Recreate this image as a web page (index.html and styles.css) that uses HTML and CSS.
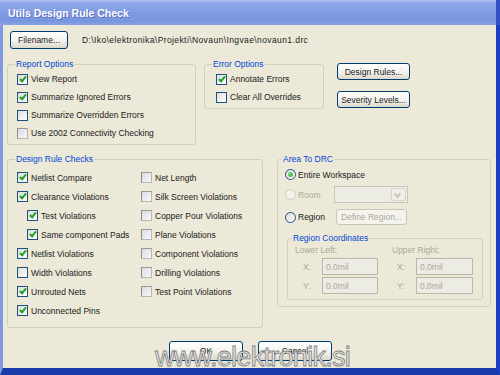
FILE: index.html
```html
<!DOCTYPE html>
<html lang="en">
<head>
  <meta charset="UTF-8" />
  <title>Utils Design Rule Check</title>
  <link rel="stylesheet" href="styles.css">
</head>
<body>
  <div class="window">
    <div class="titlebar">Utils Design Rule Check</div>
    <div class="client">
      <div class="file-row">
        <button class="btn btn-file">Filename...</button>
        <span class="path">D:\Iko\elektronika\Projekti\Novaun\Ingvae\novaun1.drc</span>
      </div>

      <div class="top-row">
        <fieldset class="group group-report">
          <legend>Report Options</legend>
          <label class="check"><span class="box on"></span>View Report</label>
          <label class="check"><span class="box on"></span>Summarize Ignored Errors</label>
          <label class="check"><span class="box"></span>Summarize Overridden Errors</label>
          <label class="check"><span class="box dim"></span>Use 2002 Connectivity Checking</label>
        </fieldset>

        <fieldset class="group group-error">
          <legend>Error Options</legend>
          <label class="check"><span class="box on"></span>Annotate Errors</label>
          <label class="check"><span class="box"></span>Clear All Overrides</label>
        </fieldset>

        <div class="side-buttons">
          <button class="btn">Design Rules...</button>
          <button class="btn">Severity Levels...</button>
        </div>
      </div>

      <div class="mid-row">
        <fieldset class="group group-drc">
          <legend>Design Rule Checks</legend>
          <div class="drc-cols">
            <div class="drc-col first">
              <label class="check"><span class="box on"></span>Netlist Compare</label>
              <label class="check"><span class="box on"></span>Clearance Violations</label>
              <label class="check sub"><span class="box on"></span>Test Violations</label>
              <label class="check sub"><span class="box on"></span>Same component Pads</label>
              <label class="check"><span class="box on"></span>Netlist Violations</label>
              <label class="check"><span class="box"></span>Width Violations</label>
              <label class="check"><span class="box on"></span>Unrouted Nets</label>
              <label class="check"><span class="box on"></span>Unconnected Pins</label>
            </div>
            <div class="drc-col">
              <label class="check"><span class="box dim"></span>Net Length</label>
              <label class="check"><span class="box dim"></span>Silk Screen Violations</label>
              <label class="check"><span class="box dim"></span>Copper Pour Violations</label>
              <label class="check"><span class="box dim"></span>Plane Violations</label>
              <label class="check"><span class="box dim"></span>Component Violations</label>
              <label class="check"><span class="box dim"></span>Drilling Violations</label>
              <label class="check"><span class="box dim"></span>Test Point Violations</label>
            </div>
          </div>
        </fieldset>

        <fieldset class="group group-area">
          <legend>Area To DRC</legend>
          <div class="area-row row-entire">
            <span class="radio on"></span><span class="area-label">Entire Workspace</span>
          </div>
          <div class="area-row row-room">
            <span class="radio off"></span><span class="area-label disabled">Room</span>
            <div class="combo"><span class="combo-arrow"></span></div>
          </div>
          <div class="area-row row-region">
            <span class="radio"></span><span class="area-label">Region</span>
            <button class="btn btn-define" disabled>Define Region...</button>
          </div>

          <fieldset class="group group-coords">
            <legend>Region Coordinates</legend>
            <div class="coords">
              <span class="coord-head">Lower Left:</span>
              <span class="coord-head right">Upper Right:</span>
              <span class="coord-label">X:</span>
              <input class="coord-input" value="0.0mil" disabled>
              <span class="coord-label right">X:</span>
              <input class="coord-input" value="0.0mil" disabled>
              <span class="coord-label">Y:</span>
              <input class="coord-input" value="0.0mil" disabled>
              <span class="coord-label right">Y:</span>
              <input class="coord-input" value="0.0mil" disabled>
            </div>
          </fieldset>
        </fieldset>
      </div>

      <div class="bottom-row">
        <button class="btn btn-main">OK</button>
        <button class="btn btn-main">Cancel</button>
      </div>
    </div>
    <div class="watermark">www.elektronik.si</div>
  </div>
</body>
</html>
```

FILE: styles.css
```css
body {
  margin: 0;
  padding: 0;
  background: #ECE9D8;
  font-family: 'Liberation Sans', Arial, sans-serif;
  font-size: 8.5px;
  color: #1a1a1a;
}

.window {
  width: 500px;
  height: 375px;
  display: flex;
  flex-direction: column;
  position: relative;
  overflow: hidden;
}

.titlebar {
  height: 25px;
  flex-shrink: 0;
  display: flex;
  align-items: center;
  padding-left: 8px;
  color: #fff;
  font-weight: bold;
  font-size: 10.5px;
  background: linear-gradient(#b3c4f1 0, #90a8e9 3px, #809be3 50%, #7a95e0 85%, #8aa2e5 100%);
  border-right: 4px solid #3451c9;
  text-shadow: 1px 1px 0 #5a70c0;
}

.client {
  flex: 1;
  background: #ECE9D8;
  border-left: 3px solid #7f98e2;
  border-right: 4px solid #1b3fc4;
  border-bottom: 7px solid #163aa8;
  padding: 6px 0 0 4px;
}

/* buttons */
.btn {
  font-family: inherit;
  font-size: 8.5px;
  color: #1a1a1a;
  padding: 0;
  height: 17px;
  border: 1px solid #003c74;
  border-radius: 3px;
  background: linear-gradient(#ffffff, #f3f2ec 55%, #dcd7cb);
  cursor: pointer;
}

.btn:disabled {
  color: #aca899;
  border-color: #c9c7ba;
  background: #f4f3ee;
}

.btn-file {
  width: 58px;
  height: 18px;
  margin-left: 3px;
}

.file-row {
  display: flex;
  align-items: center;
  gap: 14px;
}

.path {
  white-space: nowrap;
  letter-spacing: 0.4px;
}

/* group boxes */
.group {
  margin: 0;
  min-width: 0;
  box-sizing: border-box;
  border: 1px solid #d0d0bf;
  border-radius: 3px;
  padding: 0 0 2px 9px;
}

.group legend {
  color: #0046d5;
  line-height: 12px;
  padding: 0 1px;
  margin-left: -2px;
}

.top-row {
  display: flex;
  align-items: flex-start;
  margin-top: 9px;
}

.group-report {
  width: 189px;
}

.group-error {
  width: 120px;
  margin-left: 8px;
  padding-left: 11px;
}

.group-error legend {
  margin-left: -4px;
}

.side-buttons {
  display: flex;
  flex-direction: column;
  gap: 11px;
  margin: 5px 0 0 13px;
}

.side-buttons .btn {
  width: 73px;
}

/* checkboxes */
.check {
  display: flex;
  align-items: center;
  gap: 3px;
  height: 18px;
  white-space: nowrap;
}

.box {
  width: 11px;
  height: 11px;
  box-sizing: border-box;
  border: 1px solid #1c5180;
  background: linear-gradient(135deg, #dcdcd7, #ffffff);
  display: flex;
  align-items: center;
  justify-content: center;
  flex-shrink: 0;
}

.box.on::after {
  content: "";
  width: 2px;
  height: 5px;
  margin-top: -2px;
  border: solid #21a121;
  border-width: 0 2px 2px 0;
  transform: rotate(40deg);
}

.box.dim {
  border-color: #b8b7ae;
  border-left-color: #8d8c84;
  border-top-color: #9a998f;
  background: linear-gradient(135deg, #d9dce6, #f7f8fb);
}

.mid-row {
  display: flex;
  align-items: flex-start;
  margin-top: 8px;
}

.group-drc {
  width: 256px;
  padding-top: 3px;
  padding-bottom: 7px;
}

.drc-cols {
  display: flex;
}

.drc-col.first {
  width: 124px;
}

.group-drc .check {
  height: 19px;
}

.check.sub {
  padding-left: 10px;
}

/* area to drc */
.group-area {
  width: 214px;
  margin-left: 14px;
  padding: 0 7px 6px 7px;
}

.group-area legend {
  margin-left: -3px;
}

.area-row {
  display: flex;
  align-items: center;
}

.row-entire {
  height: 19px;
}

.row-room {
  height: 21px;
}

.row-region {
  height: 24px;
}

.radio {
  width: 11px;
  height: 11px;
  box-sizing: border-box;
  border-radius: 50%;
  border: 1px solid #1c5180;
  background: linear-gradient(135deg, #dcdcd7, #ffffff);
  display: flex;
  align-items: center;
  justify-content: center;
  margin-right: 2px;
  flex-shrink: 0;
}

.radio.on::after {
  content: "";
  width: 5px;
  height: 5px;
  border-radius: 50%;
  background: radial-gradient(circle at 35% 35%, #7fe07f, #21a121);
}

.radio.off {
  border-color: #cfcdc2;
  background: #f2f1ea;
}

.area-label {
  width: 36px;
  white-space: nowrap;
}

.disabled {
  color: #aca899;
}

.combo {
  width: 74px;
  height: 17px;
  box-sizing: border-box;
  border: 1px solid #c9c7ba;
  background: #ecebe4;
  display: flex;
  justify-content: flex-end;
  padding: 1px;
}

.combo-arrow {
  width: 13px;
  border: 1px solid #d8d6cc;
  border-radius: 2px;
  background: #f0efe9;
  position: relative;
}

.combo-arrow::after {
  content: "";
  position: absolute;
  left: 3px;
  top: 3px;
  width: 3px;
  height: 3px;
  border: solid #c4c2b6;
  border-width: 0 2px 2px 0;
  transform: rotate(45deg);
}

.btn-define {
  width: 71px;
  height: 16px;
  margin-left: 2px;
}

.group-coords {
  margin: 3px 0 0 2px;
  padding: 0 0 5px 7px;
}

.group-coords legend {
  margin-left: -3px;
}

.coords {
  display: grid;
  grid-template-columns: 27px 56px 38px 57px;
  grid-template-rows: 12px 17px 17px;
  row-gap: 2px;
  align-items: center;
  color: #aca899;
}

.coord-head {
  grid-column: span 2;
  white-space: nowrap;
}

.coord-head.right {
  padding-left: 14px;
}

.coord-label {
  padding-left: 8px;
}

.coord-label.right {
  padding-left: 19px;
}

.coord-input {
  height: 17px;
  width: 100%;
  box-sizing: border-box;
  border: 1px solid #b9b7aa;
  background: #ecebe4;
  color: #aca899;
  font-family: inherit;
  font-size: 8.5px;
  padding: 0 3px;
}

/* dialog buttons */
.bottom-row {
  display: flex;
  gap: 15px;
  margin: 13px 0 0 162px;
}

.btn-main {
  width: 74px;
  height: 20px;
}

.watermark {
  position: absolute;
  left: 155px;
  top: 344px;
  font-size: 27px;
  line-height: 27px;
  letter-spacing: -0.7px;
  color: #e6e6e6;
  -webkit-text-stroke: 0.8px #808080;
  white-space: nowrap;
}
```
